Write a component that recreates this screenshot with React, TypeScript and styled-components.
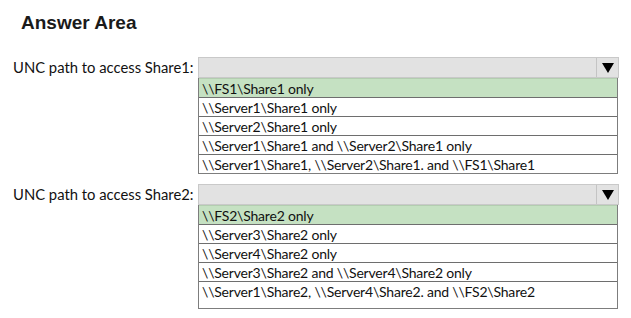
import React from 'react';
import styled, { createGlobalStyle } from 'styled-components';

const GlobalStyle = createGlobalStyle`
    html, body {
        margin: 0;
        padding: 0;
        background: #ffffff;
    }
    body {
        font-family: Lato, "Open Sans", sans-serif;
        color: #111111;
    }
`;

const Root = styled.div`
    width: 631px;
    height: 318px;
    padding: 11px 12px 0 13px;
    box-sizing: border-box;
`;

const Title = styled.h1`
    margin: 0 0 23px 8px;
    font-family: "Liberation Sans", Arial, sans-serif;
    font-size: 19px;
    font-weight: bold;
    line-height: 23px;
    color: #1a1a1a;
`;

const Question = styled.div`
    display: grid;
    grid-template-columns: 185px 421px;
    align-items: start;
    margin-bottom: 10px;
`;

const Label = styled.div`
    font-size: 14.8px;
    line-height: 21px;
    white-space: nowrap;
`;

const Select = styled.div`
    display: flex;
    flex-direction: column;
`;

const Header = styled.div`
    display: flex;
    height: 21px;
    box-sizing: border-box;
    border: 1px solid #c9c9c9;
    background: #e2e2e2;
`;

const HeaderFill = styled.div`
    flex-grow: 1;
`;

const ArrowCell = styled.div`
    width: 21px;
    display: flex;
    align-items: center;
    justify-content: center;
    border-left: 1px solid #c4c4c4;
`;

const List = styled.div`
    margin-right: 1px;
    border: 1px solid #7d7d7d;
    border-top: none;
`;

const Option = styled.div<{ $selected?: boolean; $tall?: boolean }>`
    height: ${p => (p.$tall ? 26 : 18)}px;
    padding: 0 3px;
    font-size: 14px;
    letter-spacing: -0.2px;
    line-height: 20px;
    white-space: nowrap;
    background: ${p => (p.$selected ? '#c5e1c2' : '#ffffff')};
    border-top: 1px solid ${p => (p.$selected ? '#b3cdb0' : '#6e6e6e')};
`;

const Arrow = () => (
    <svg width="12" height="10" viewBox="0 0 12 10">
        <polygon points="0,0 12,0 6,10" fill="#000000" />
    </svg>
);

const questions = [
    {
        label: 'UNC path to access Share1:',
        options: [
            '\\\\FS1\\Share1 only',
            '\\\\Server1\\Share1 only',
            '\\\\Server2\\Share1 only',
            '\\\\Server1\\Share1 and \\\\Server2\\Share1 only',
            '\\\\Server1\\Share1, \\\\Server2\\Share1. and \\\\FS1\\Share1',
        ],
        tallLast: false,
    },
    {
        label: 'UNC path to access Share2:',
        options: [
            '\\\\FS2\\Share2 only',
            '\\\\Server3\\Share2 only',
            '\\\\Server4\\Share2 only',
            '\\\\Server3\\Share2 and \\\\Server4\\Share2 only',
            '\\\\Server1\\Share2, \\\\Server4\\Share2. and \\\\FS2\\Share2',
        ],
        tallLast: true,
    },
];

const App = () => {
    return (
        <Root>
            <GlobalStyle />
            <Title>Answer Area</Title>
            {questions.map(q => (
                <Question key={q.label}>
                    <Label>{q.label}</Label>
                    <Select>
                        <Header>
                            <HeaderFill />
                            <ArrowCell>
                                <Arrow />
                            </ArrowCell>
                        </Header>
                        <List>
                            {q.options.map((opt, i) => (
                                <Option
                                    key={opt}
                                    $selected={i === 0}
                                    $tall={q.tallLast && i === q.options.length - 1}
                                >
                                    {opt}
                                </Option>
                            ))}
                        </List>
                    </Select>
                </Question>
            ))}
        </Root>
    );
};

export default App;
